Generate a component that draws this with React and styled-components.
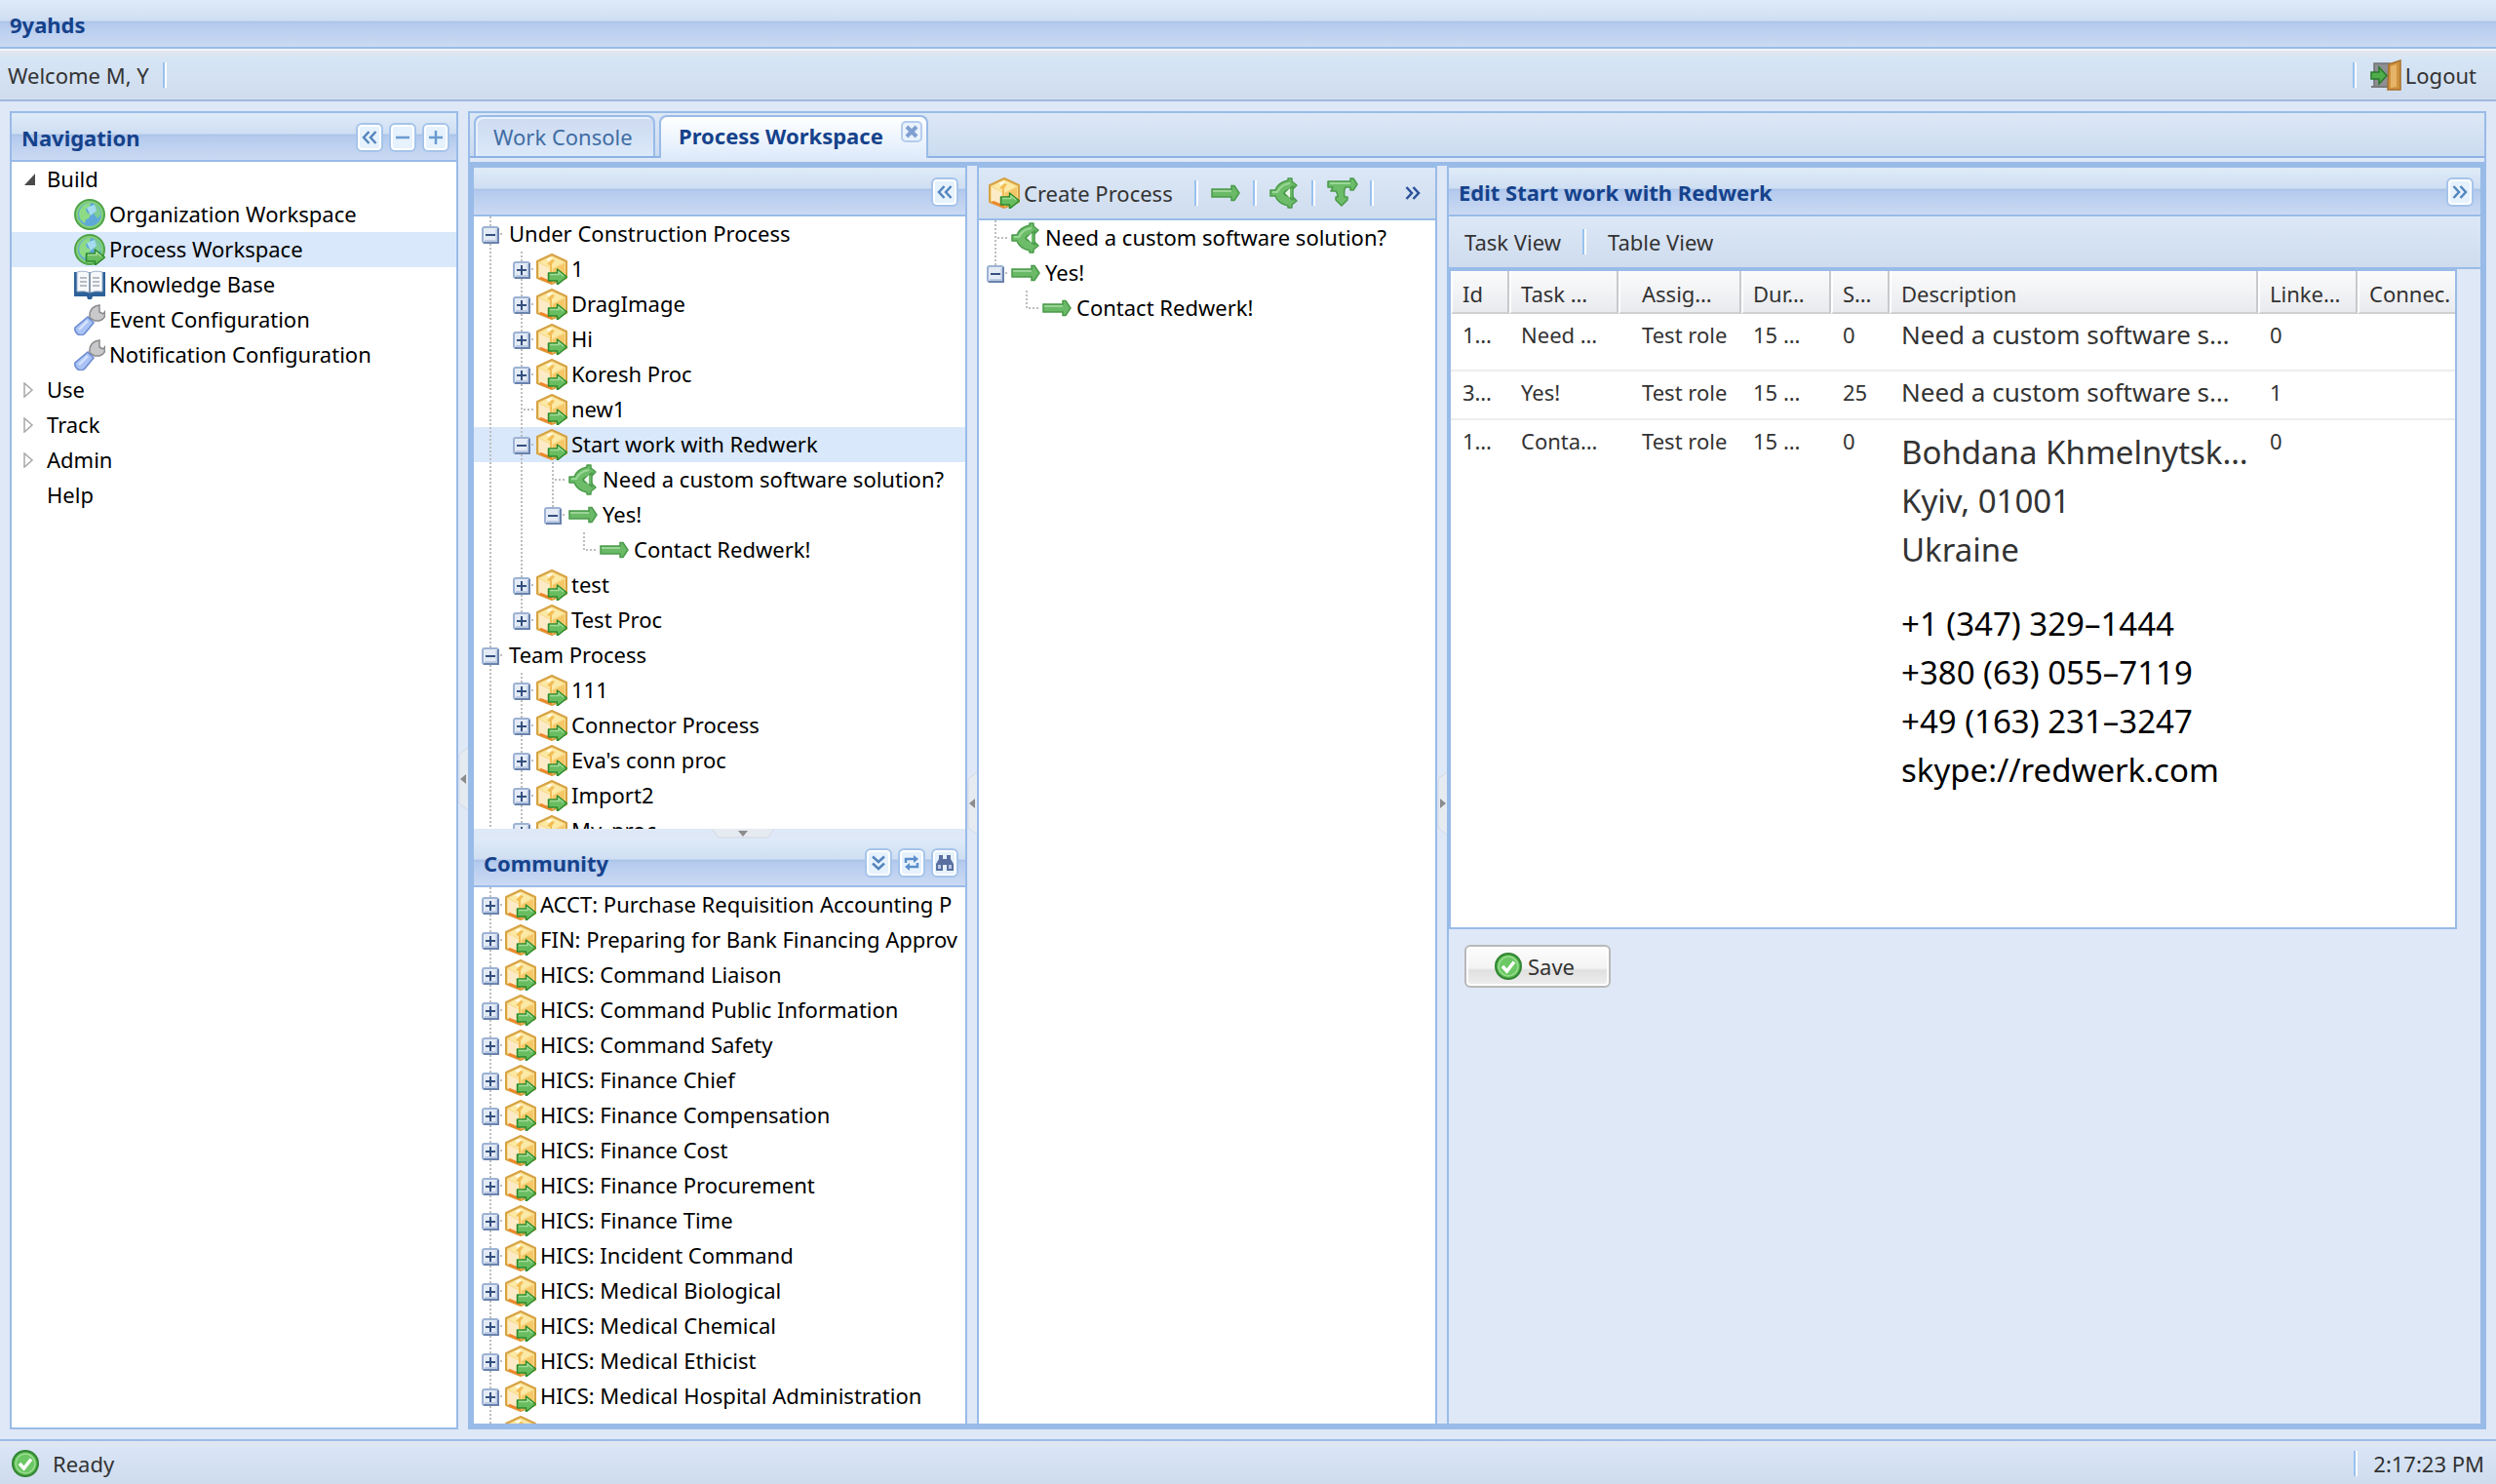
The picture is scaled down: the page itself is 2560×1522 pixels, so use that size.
import React from 'react';
import styled, { createGlobalStyle, css } from 'styled-components';

const GlobalStyle = createGlobalStyle`
  * {
    box-sizing: border-box;
  }

  body {
    margin: 0;
    background-color: #dfe8f6;
    color: #000;
    font-family: 'Noto Sans', 'Open Sans', sans-serif;
    font-size: 22px;
    line-height: 36px;
  }

  button {
    font: inherit;
    color: inherit;
    padding: 0;
    border: 0;
    background: none;
    cursor: pointer;
  }

  ul {
    list-style: none;
    margin: 0;
    padding: 0;
  }

  svg {
    display: block;
    flex: none;
  }
`;

const headerFill = css`
  background: linear-gradient(
    #dfebf8 0%,
    #cfdef2 44%,
    #aac3e8 46%,
    #b5cbee 52%,
    #cbdaf3 100%
  );
`;

const Page = styled.div`
  display: flex;
  flex-direction: column;
  height: 100vh;
  overflow: hidden;
`;

const TitleBar = styled.h1`
  ${headerFill}
  margin: 0;
  padding: 2px 10px 0;
  height: 50px;
  line-height: 46px;
  font-size: 22px;
  color: #15428b;
  border-bottom: 2px solid #99bbe8;
`;

const TopBar = styled.div`
  display: flex;
  align-items: center;
  height: 54px;
  padding: 0 20px 0 8px;
  color: #333;
  background: linear-gradient(#e2e6ee 0, #d6e5f5 8px, #cfdced 100%);
  border-top: 2px solid #f1f6fc;
  border-bottom: 2px solid #a0b9e0;
`;

const StatusBar = styled(TopBar)`
  height: 46px;
  padding: 2px 12px 0;
  background: linear-gradient(#e2e6ee 0, #d9e5f6 8px, #cfdced 100%);
  border-top: 2px solid #99bbe8;
  border-bottom: 0;
`;

const StatusText = styled.span`
  margin-left: 14px;
`;

const Spacer = styled.div`
  flex: 1;
`;

const Separator = styled.span`
  flex: none;
  width: 4px;
  height: 26px;
  margin: 0 ${(p) => p.$gap || 0}px;
  border-left: 2px solid #98c2f0;
  border-right: 2px solid #fff;
`;

const ToolbarButton = styled.button`
  display: flex;
  align-items: center;
  gap: 4px;
  color: #333;
`;

const CreateButton = styled(ToolbarButton)`
  margin-right: 10px;
`;

const Body = styled.main`
  flex: 1;
  display: flex;
  min-height: 0;
  padding: 10px;
`;

const Panel = styled.section`
  display: flex;
  flex-direction: column;
  min-height: 0;
  background-color: #fff;
  border: 2px solid #99bbe8;
`;

const NavPanel = styled(Panel)`
  flex: none;
  width: 460px;
`;

const PanelHeader = styled.header`
  ${headerFill}
  display: flex;
  align-items: center;
  gap: 4px;
  flex: none;
  height: 50px;
  padding: 2px 6px 0 10px;
  border-bottom: 2px solid #99bbe8;
`;

const PanelTitle = styled.h2`
  flex: 1;
  margin: 0;
  font-size: 22px;
  line-height: 46px;
  color: #15428b;
`;

const Tool = styled.button`
  display: flex;
  align-items: center;
  justify-content: center;
  width: 28px;
  height: 30px;
  margin: 0 1px;
  border: 2px solid #a5c4ea;
  border-radius: 6px;
  background-color: #e6f2fd;
  box-shadow: inset 0 0 0 2px #fff;
`;

const Row = styled.div`
  display: flex;
  align-items: center;
  height: 36px;
  white-space: nowrap;
  background-color: ${(p) => (p.$selected ? '#d9e8fb' : 'transparent')};
`;

const RowLabel = styled.span`
  margin-left: 4px;
  padding-bottom: 2px;
`;

const NavLink = styled.a`
  display: flex;
  align-items: center;
  height: 36px;
  padding-left: ${(p) => (p.$child ? 64 : 12)}px;
  color: inherit;
  text-decoration: none;
  background-color: ${(p) => (p.$selected ? '#d9e8fb' : 'transparent')};
`;

const NavLabel = styled(RowLabel)`
  margin-left: ${(p) => (p.$child ? 4 : 8)}px;
`;

const CaretSlot = styled.span`
  width: 16px;
`;

const TreeView = styled.div`
  flex: ${(p) => p.$grow || 1} 1 0;
  min-height: 0;
  overflow: hidden;
  background-color: #fff;
`;

const Splitter = styled.div`
  flex: none;
  display: flex;
  align-items: center;
  justify-content: center;
  background-color: #dfe8f6;
  ${(p) =>
    p.$horizontal
      ? 'height: 10px; padding-left: 48px;'
      : 'width: 10px; padding-top: 18px;'}
`;

const Workspace = styled.section`
  flex: 1;
  min-width: 0;
  display: flex;
  flex-direction: column;
  border: 2px solid #99bbe8;
`;

const TabStrip = styled.div`
  display: flex;
  align-items: flex-end;
  gap: 4px;
  flex: none;
  height: 46px;
  padding: 0 4px 0 4px;
  background: linear-gradient(#dde8f6, #cbdbf0);
  border-bottom: 2px solid #8db2e3;
`;

const Tab = styled.button`
  min-width: 186px;
  height: 42px;
  padding: 0 18px;
  color: #416da3;
  text-align: left;
  background: linear-gradient(#cddaf0, #dbe9fa);
  border: 2px solid #99bbe8;
  border-bottom: 0;
  border-radius: 8px 8px 0 0;
  box-shadow: inset 2px 2px 0 #e8f1fb;
`;

const ActiveTab = styled.div`
  display: flex;
  justify-content: space-between;
  min-width: 276px;
  height: 44px;
  margin-bottom: -2px;
  padding: 0 4px 0 18px;
  color: #15428b;
  background: linear-gradient(#fff, #deebfb);
  border: 2px solid #99bbe8;
  border-bottom: 0;
  border-radius: 8px 8px 0 0;
`;

const ActiveTabLabel = styled.button`
  height: 38px;
  font-weight: bold;
`;

const CloseButton = styled.button`
  display: flex;
  align-items: center;
  justify-content: center;
  width: 22px;
  height: 22px;
  margin-top: 4px;
  border: 2px solid #b4cdec;
  border-radius: 5px;
  background-color: #e9f2fd;
`;

const Columns = styled.div`
  flex: 1;
  display: flex;
  min-height: 0;
  border: 4px solid #99bbe8;
  margin-top: 4px;
  background-color: #dfe8f6;
`;

const ProcessColumn = styled(Panel)`
  flex: none;
  width: 506px;
  border-width: 2px 2px 0 0;
`;

const FlowColumn = styled(Panel)`
  flex: none;
  width: 472px;
  border-bottom-width: 0;
`;

const EditColumn = styled(Panel)`
  flex: 1;
  min-width: 0;
  border-width: 2px 0 0 2px;
  background-color: #dfe8f6;
`;

const Toolbar = styled.div`
  display: flex;
  align-items: center;
  flex: none;
  height: 54px;
  padding: 0 ${(p) => p.$padRight || 16}px 0 ${(p) => p.$padLeft || 16}px;
  background: linear-gradient(#dce8f6, #cfdcee);
  border-bottom: 2px solid #99bbe8;
`;

const GridFrame = styled.div`
  flex: none;
  margin-right: 24px;
  padding-bottom: 136px;
  background-color: #fff;
  border: 2px solid #99bbe8;
`;

const Table = styled.table`
  width: 100%;
  table-layout: fixed;
  border-collapse: separate;
  border-spacing: 0;
  color: #333;
`;

const Th = styled.th`
  height: 44px;
  padding: 4px 4px 0 ${(p) => (p.$indent ? 22 : 10)}px;
  font-weight: normal;
  line-height: 36px;
  text-align: left;
  white-space: nowrap;
  overflow: hidden;
  background: linear-gradient(#fafafa 0, #f3f4f6 45%, #e9eaee 100%);
  border-left: 2px solid #fff;
  border-right: 2px solid #c8c9cc;
  border-bottom: 2px solid #d0d0d0;

  &:last-child {
    border-right: 0;
  }
`;

const Td = styled.td`
  height: ${(p) => p.$height}px;
  padding: ${(p) => (p.$rich ? 8 : 3)}px 4px 0 ${(p) => (p.$indent ? 24 : 12)}px;
  vertical-align: top;
  white-space: nowrap;
  overflow: hidden;
  font-size: ${(p) => (p.$large ? 26 : 22)}px;
  border-bottom: ${(p) => (p.$last ? 0 : 2)}px solid #ededed;
`;

const Address = styled.p`
  margin: 0 0 26px;
  font-size: 33px;
  line-height: 50px;
  color: ${(p) => (p.$dark ? '#000' : '#333')};

  &:last-child {
    margin: 0;
  }
`;

const SaveButton = styled.button`
  display: flex;
  align-items: center;
  justify-content: center;
  gap: 6px;
  flex: none;
  width: 150px;
  height: 44px;
  margin: 16px;
  padding-right: 6px;
  color: #333;
  border: 2px solid #b9b9b9;
  border-radius: 6px;
  background: linear-gradient(#fdfdfd 0, #f3f3f3 55%, #e0e0e0 60%, #eeeeee 100%);
  box-shadow: inset 0 0 0 2px #fff;
`;

const ArrowOverlay = () => (
  <>
    <path
      d="M12.500 20h9v-4l10 8-10 8v-4h-9z"
      fill="#69bd61"
      stroke="#2b8a2a"
      strokeWidth="1.500"
      strokeLinejoin="round"
    />
    <path d="M14 21.500h9v-2.500l5 4" fill="none" stroke="#a4dc9a" strokeWidth="1.500" />
  </>
);

const PackageIcon = () => (
  <svg width="32" height="32" viewBox="0 0 32 32" aria-hidden="true">
    <path d="M16 1l15 7v17l-15 6-15-6V8z" fill="#f9dc8c" stroke="#d6a244" strokeWidth="2" strokeLinejoin="round" />
    <path d="M16 3l12 6-12 6.500L4 9z" fill="#fbe9a6" />
    <path d="M3 10l12 6v13L3 24z" fill="#fdebc8" />
    <path d="M17 16l12-6v14l-12 5z" fill="#f6c768" />
    <path d="M11 11l5-5 3 1-3 4v8h-2v-7z" fill="#f3bd55" />
    <path d="M10 6l4-2 3 1-4 3z" fill="#fffbe6" />
    <path d="M4 25l12 5" stroke="#f0862c" strokeWidth="2.500" />
    <ArrowOverlay />
  </svg>
);

const GlobeIcon = ({ arrow }) => (
  <svg width="32" height="32" viewBox="0 0 32 32" aria-hidden="true">
    <circle cx="16" cy="16" r="15" fill="#86d07a" stroke="#4fa34a" strokeWidth="2" />
    <circle cx="16" cy="16" r="12" fill="#5fa9d8" />
    <path d="M6 11q4-7 11-7l-1 4-4 2 1 4 4 2-2 4-3 1-1 4q-6-3-6-10z" fill="#8edb86" />
    <path d="M20 5q7 3 8 11l-4 4-4-5 3-4z" fill="#7dcd96" />
    <path d="M13 9l8-3 2 6-6 5z" fill="#a6dcef" />
    {arrow && <ArrowOverlay />}
  </svg>
);

const BookIcon = () => (
  <svg width="32" height="32" viewBox="0 0 32 32" aria-hidden="true">
    <path d="M0 3h32v25H19l-1 3h-4l-1-3H0z" fill="#2d6199" />
    <path d="M3 3q8-2 13 1 5-3 13-1v20q-8-1-13 1-5-2-13-1z" fill="#f7f8fa" stroke="#9fb4cc" />
    <path d="M16 4v20" stroke="#8697ab" strokeWidth="2" />
    <path d="M6 9h7M6 13h7M6 17h7M19 9h7M19 13h7M19 17h7" stroke="#b7bcc4" strokeWidth="2" />
  </svg>
);

const WrenchIcon = () => (
  <svg width="32" height="32" viewBox="0 0 32 32" aria-hidden="true">
    <path
      d="M16 14q-1-9 6-12l4-1v7l4 2 2-3q1 8-6 10h-5z"
      fill="#c9c9cb"
      stroke="#8b8b8f"
      strokeWidth="1.500"
    />
    <path d="M14 13l6 6-9 11q-3 3-7 1-4-3-3-7z" fill="#a9c3f6" stroke="#6c8ad0" strokeWidth="1.500" />
    <path d="M14 17L5 26" stroke="#d4e1fd" strokeWidth="2.500" />
  </svg>
);

const CaretIcon = ({ open }) => (
  <svg width="16" height="16" viewBox="0 0 16 16" aria-hidden="true">
    {open ? (
      <path d="M12 2v12H1z" fill="#4b4b4b" />
    ) : (
      <path d="M1 1v14l8-7z" fill="#fff" stroke="#a8a8a8" strokeWidth="1.500" />
    )}
  </svg>
);

const TaskIcon = () => (
  <svg width="32" height="32" viewBox="0 0 32 32" aria-hidden="true">
    <path
      d="M2 12h20V8.500h3l5 7.500-5 7.500h-3V20H2z"
      fill="#69b967"
      stroke="#4a9a4a"
      strokeWidth="1.500"
    />
    <path d="M3 14h19" stroke="#9bd497" strokeWidth="2" />
  </svg>
);

const ForkIcon = () => (
  <svg width="32" height="32" viewBox="0 0 32 32" aria-hidden="true">
    <path
      d="M2 13h5q3-8 13-10V1h4v3l5 4-5 5h-3q-4 0-5 3 1 3 5 3h3l5 5-5 4v3h-4v-2q-10-2-13-10H2z"
      fill="#6cbc69"
      stroke="#4a9a4a"
      strokeWidth="1.500"
      strokeLinejoin="round"
    />
    <path d="M4 15h5q4-8 13-9" fill="none" stroke="#9bd897" strokeWidth="2" />
    <path d="M25 9v14l-9-7z" fill="#6cbc69" stroke="#4a9a4a" strokeWidth="1.500" />
    <path d="M22 11v10l-5-5z" fill="#eef7ee" />
  </svg>
);

const SplitIcon = () => (
  <svg width="32" height="32" viewBox="0 0 32 32" aria-hidden="true">
    <path
      d="M1 4h23V1h3l4 6-4 6h-3v-3h-5q-2 3-1 10h3v3l-6 6-6-6v-3h2q0-4-2-6H4l2-4H1z"
      fill="#6cbc69"
      stroke="#4a9a4a"
      strokeWidth="1.500"
      strokeLinejoin="round"
    />
    <path d="M3 6h21" stroke="#9bd897" strokeWidth="2" />
  </svg>
);

const LogoutIcon = () => (
  <svg width="32" height="32" viewBox="0 0 32 32" aria-hidden="true">
    <path d="M4 4h16v24H4z" fill="#8d8f93" stroke="#6f7176" strokeWidth="1.500" />
    <path d="M1 28h20" stroke="#7a7a7a" strokeWidth="2" />
    <path d="M19 5l12-4v30H18z" fill="#cf9340" stroke="#a8702a" strokeWidth="1.500" />
    <path d="M21 7l6-2v23l-6 1z" fill="#e6b468" />
    <path d="M1 13h8V8l8 8.500L9 25v-5H1z" fill="#4fae4a" stroke="#2a7a2d" strokeWidth="1.500" />
  </svg>
);

const CheckIcon = () => (
  <svg width="28" height="28" viewBox="0 0 28 28" aria-hidden="true">
    <circle cx="14" cy="14" r="13" fill="#52b34a" stroke="#328534" strokeWidth="2" />
    <circle cx="14" cy="14" r="10" fill="#6cc765" stroke="#9adf92" strokeWidth="1.500" />
    <path d="M8 14l4.500 5L20 9.500" fill="none" stroke="#fff" strokeWidth="3.500" />
  </svg>
);

const ChevronsIcon = ({ rotate = 0, color = '#5585bd' }) => (
  <svg width="18" height="18" viewBox="0 0 18 18" aria-hidden="true">
    <path
      d="M8.500 3L3 9l5.500 6M15.500 3L10 9l5.500 6"
      transform={`rotate(${rotate} 9 9)`}
      fill="none"
      stroke={color}
      strokeWidth="2.500"
    />
  </svg>
);

const SignIcon = ({ plus }) => (
  <svg width="18" height="18" viewBox="0 0 18 18" aria-hidden="true">
    <path d={plus ? 'M2 9h14M9 2v14' : 'M2 9h14'} stroke="#6b9bd0" strokeWidth="2.500" />
  </svg>
);

const RefreshIcon = () => (
  <svg width="18" height="18" viewBox="0 0 18 18" aria-hidden="true">
    <path d="M3 9V5h9M15 9v4H6" fill="none" stroke="#5b8fca" strokeWidth="2.500" />
    <path d="M11 1l5 4-5 4zM7 9l-5 4 5 4z" fill="#5b8fca" />
  </svg>
);

const BinocularsIcon = () => (
  <svg width="20" height="18" viewBox="0 0 20 18" aria-hidden="true">
    <path d="M4 1h4v4h4V1h4v4l3 5v7h-7v-6H8v6H1v-7l3-5z" fill="#5a70a0" />
    <path d="M3 11h3v4H3zM14 11h3v4h-3z" fill="#b9c9e6" />
  </svg>
);

const CrossIcon = () => (
  <svg width="14" height="14" viewBox="0 0 14 14" aria-hidden="true">
    <path d="M2 2l10 10M12 2L2 12" stroke="#7f9fd0" strokeWidth="4" />
  </svg>
);

/* line, tee and end are the dotted guides; box puts an expander on top */
const guidePaths = {
  blank: '',
  line: 'M17 0v36',
  tee: 'M17 0v36M19 18h11',
  end: 'M17 0v18h13',
};

const Guide = ({ shape, box }) => (
  <svg width="32" height="36" viewBox="0 0 32 36" aria-hidden="true">
    <path d={guidePaths[shape]} fill="none" stroke="#bdbdbd" strokeWidth="2" strokeDasharray="2 2" />
    {box && (
      <>
        <rect x="9" y="11" width="16" height="16" rx="2" fill="#e4ebf6" stroke="#9db2d4" strokeWidth="2" />
        <path d="M11 25h12.500V13" fill="none" stroke="#bccbe3" strokeWidth="2" />
        <path d="M10 27h15V12" fill="none" stroke="#6a83ae" strokeWidth="2" />
        <path d={box === 'plus' ? 'M12 19h10M17 14v10' : 'M12 19h10'} stroke="#34507f" strokeWidth="2" />
      </>
    )}
  </svg>
);

const gripPaths = {
  left: 'M8 28v10l-6-5z',
  right: 'M3 28v10l6-5z',
};

const Grip = ({ dir }) =>
  dir === 'down' ? (
    <svg width="66" height="10" viewBox="0 0 66 10" aria-hidden="true">
      <path d="M1 0l7 9h50l7-9" fill="#e6ebf2" stroke="#d2d9e4" />
      <path d="M28 2h10l-5 6z" fill="#8c8c8c" />
    </svg>
  ) : (
    <svg width="10" height="66" viewBox="0 0 10 66" aria-hidden="true">
      <path d="M10 1L1 8v50l9 7" fill="#e6ebf2" stroke="#d2d9e4" />
      <path d={gripPaths[dir]} fill="#8c8c8c" />
    </svg>
  );

const icons = {
  pkg: <PackageIcon />,
  fork: <ForkIcon />,
  task: <TaskIcon />,
};

const navItems = [
  { label: 'Build', open: true },
  { label: 'Organization Workspace', icon: <GlobeIcon /> },
  { label: 'Process Workspace', icon: <GlobeIcon arrow />, selected: true },
  { label: 'Knowledge Base', icon: <BookIcon /> },
  { label: 'Event Configuration', icon: <WrenchIcon /> },
  { label: 'Notification Configuration', icon: <WrenchIcon /> },
  { label: 'Use' },
  { label: 'Track' },
  { label: 'Admin' },
  { label: 'Help', leaf: true },
];

const pkg = (label, extra) => ({
  label,
  icon: 'pkg',
  guides: ['line', 'tee'],
  box: 'plus',
  ...extra,
});

const processTree = [
  { label: 'Under Construction Process', guides: ['tee'], box: 'minus' },
  pkg('1'),
  pkg('DragImage'),
  pkg('Hi'),
  pkg('Koresh Proc'),
  pkg('new1', { box: null }),
  pkg('Start work with Redwerk', { box: 'minus', selected: true }),
  { label: 'Need a custom software solution?', icon: 'fork', guides: ['line', 'line', 'tee'] },
  { label: 'Yes!', icon: 'task', guides: ['line', 'line', 'end'], box: 'minus' },
  { label: 'Contact Redwerk!', icon: 'task', guides: ['line', 'line', 'blank', 'end'] },
  pkg('test'),
  pkg('Test Proc', { guides: ['line', 'end'] }),
  { label: 'Team Process', guides: ['tee'], box: 'minus' },
  pkg('111'),
  pkg('Connector Process'),
  pkg("Eva's conn proc"),
  pkg('Import2'),
  pkg('My_proc'),
];

const communityTree = [
  'ACCT: Purchase Requisition Accounting P',
  'FIN: Preparing for Bank Financing Approv',
  'HICS: Command Liaison',
  'HICS: Command Public Information',
  'HICS: Command Safety',
  'HICS: Finance Chief',
  'HICS: Finance Compensation',
  'HICS: Finance Cost',
  'HICS: Finance Procurement',
  'HICS: Finance Time',
  'HICS: Incident Command',
  'HICS: Medical Biological',
  'HICS: Medical Chemical',
  'HICS: Medical Ethicist',
  'HICS: Medical Hospital Administration',
  'HICS: Medical Legal',
].map((label) => ({ label, icon: 'pkg', guides: ['tee'], box: 'plus' }));

const flowTree = [
  { label: 'Need a custom software solution?', icon: 'fork', guides: ['tee'] },
  { label: 'Yes!', icon: 'task', guides: ['end'], box: 'minus' },
  { label: 'Contact Redwerk!', icon: 'task', guides: ['blank', 'end'] },
];

const gridColumns = [
  { label: 'Id', width: 60 },
  { label: 'Task …', width: 112 },
  { label: 'Assig…', width: 126, indent: true },
  { label: 'Dur…', width: 92 },
  { label: 'S…', width: 60 },
  { label: 'Description', width: 378 },
  { label: 'Linke…', width: 102 },
  { label: 'Connec.' },
];

const gridRows = [
  { height: 59, cells: ['1…', 'Need …', 'Test role', '15 …', '0', 'Need a custom software s…', '0', ''] },
  { height: 50, cells: ['3…', 'Yes!', 'Test role', '15 …', '25', 'Need a custom software s…', '1', ''] },
  { height: 0, cells: ['1…', 'Conta…', 'Test role', '15 …', '0', null, '0', ''] },
];

const Tree = ({ items, grow, label }) => (
  <TreeView $grow={grow}>
    <ul aria-label={label}>
      {items.map((item, i) => (
        <li key={i}>
          <Row $selected={item.selected}>
            {item.guides.map((shape, g) => (
              <Guide key={g} shape={shape} box={g === item.guides.length - 1 ? item.box : null} />
            ))}
            {icons[item.icon]}
            <RowLabel>{item.label}</RowLabel>
          </Row>
        </li>
      ))}
    </ul>
  </TreeView>
);

const Navigation = () => (
  <NavPanel>
    <PanelHeader>
      <PanelTitle>Navigation</PanelTitle>
      <Tool aria-label="Collapse panel"><ChevronsIcon /></Tool>
      <Tool aria-label="Collapse all"><SignIcon /></Tool>
      <Tool aria-label="Expand all"><SignIcon plus /></Tool>
    </PanelHeader>
    <nav>
      {navItems.map((item) => (
        <NavLink key={item.label} href="#" $child={!!item.icon} $selected={item.selected}>
          {item.icon || <CaretSlot>{!item.leaf && <CaretIcon open={item.open} />}</CaretSlot>}
          <NavLabel $child={!!item.icon}>{item.label}</NavLabel>
        </NavLink>
      ))}
    </nav>
  </NavPanel>
);

const TaskGrid = () => (
  <GridFrame>
    <Table>
      <colgroup>
        {gridColumns.map((col) => (
          <col key={col.label} width={col.width} />
        ))}
      </colgroup>
      <thead>
        <tr>
          {gridColumns.map((col) => (
            <Th key={col.label} $indent={col.indent}>{col.label}</Th>
          ))}
        </tr>
      </thead>
      <tbody>
        {gridRows.map((row, r) => (
          <tr key={r}>
            {row.cells.map((cell, c) => (
              <Td
                key={c}
                $height={row.height}
                $indent={gridColumns[c].indent}
                $large={c === 5}
                $rich={cell === null}
                $last={r === gridRows.length - 1}
              >
                {cell === null ? (
                  <>
                    <Address>
                      Bohdana Khmelnytsk…<br />
                      Kyiv, 01001<br />
                      Ukraine
                    </Address>
                    <Address $dark>
                      +1 (347) 329–1444<br />
                      +380 (63) 055–7119<br />
                      +49 (163) 231–3247<br />
                      skype://redwerk.com
                    </Address>
                  </>
                ) : (
                  cell
                )}
              </Td>
            ))}
          </tr>
        ))}
      </tbody>
    </Table>
  </GridFrame>
);

const App = () => (
  <>
    <GlobalStyle />
    <Page>
      <TitleBar>9yahds</TitleBar>
      <TopBar>
        <span>Welcome M, Y</span>
        <Separator $gap={14} />
        <Spacer />
        <Separator $gap={14} />
        <ToolbarButton>
          <LogoutIcon />
          Logout
        </ToolbarButton>
      </TopBar>

      <Body>
        <Navigation />
        <Splitter><Grip dir="left" /></Splitter>
        <Workspace>
          <TabStrip>
            <Tab>Work Console</Tab>
            <ActiveTab>
              <ActiveTabLabel>Process Workspace</ActiveTabLabel>
              <CloseButton aria-label="Close tab"><CrossIcon /></CloseButton>
            </ActiveTab>
          </TabStrip>
          <Columns>
            <ProcessColumn>
              <PanelHeader>
                <Spacer />
                <Tool aria-label="Collapse panel"><ChevronsIcon /></Tool>
              </PanelHeader>
              <Tree items={processTree} grow={8} label="Processes" />
              <Splitter $horizontal><Grip dir="down" /></Splitter>
              <PanelHeader>
                <PanelTitle>Community</PanelTitle>
                <Tool aria-label="Expand all"><ChevronsIcon rotate={-90} /></Tool>
                <Tool aria-label="Refresh"><RefreshIcon /></Tool>
                <Tool aria-label="Search"><BinocularsIcon /></Tool>
              </PanelHeader>
              <Tree items={communityTree} grow={7} label="Community" />
            </ProcessColumn>
            <Splitter><Grip dir="left" /></Splitter>
            <FlowColumn>
              <Toolbar $padLeft={10} $padRight={14}>
                <CreateButton>
                  <PackageIcon />
                  Create Process
                </CreateButton>
                <Separator $gap={12} />
                <ToolbarButton aria-label="Add task"><TaskIcon /></ToolbarButton>
                <Separator $gap={12} />
                <ToolbarButton aria-label="Add condition"><ForkIcon /></ToolbarButton>
                <Separator $gap={12} />
                <ToolbarButton aria-label="Add branch"><SplitIcon /></ToolbarButton>
                <Separator $gap={12} />
                <Spacer />
                <ToolbarButton aria-label="More"><ChevronsIcon rotate={180} color="#2a5298" /></ToolbarButton>
              </Toolbar>
              <Tree items={flowTree} label="Process steps" />
            </FlowColumn>
            <Splitter><Grip dir="right" /></Splitter>
            <EditColumn>
              <PanelHeader>
                <PanelTitle>Edit Start work with Redwerk</PanelTitle>
                <Tool aria-label="Collapse panel"><ChevronsIcon rotate={180} /></Tool>
              </PanelHeader>
              <Toolbar>
                <ToolbarButton>Task View</ToolbarButton>
                <Separator $gap={22} />
                <ToolbarButton>Table View</ToolbarButton>
              </Toolbar>
              <TaskGrid />
              <SaveButton>
                <CheckIcon />
                Save
              </SaveButton>
            </EditColumn>
          </Columns>
        </Workspace>
      </Body>

      <StatusBar as="footer">
        <CheckIcon />
        <StatusText>Ready</StatusText>
        <Spacer />
        <Separator $gap={16} />
        <time>2:17:23 PM</time>
      </StatusBar>
    </Page>
  </>
);

export default App;
